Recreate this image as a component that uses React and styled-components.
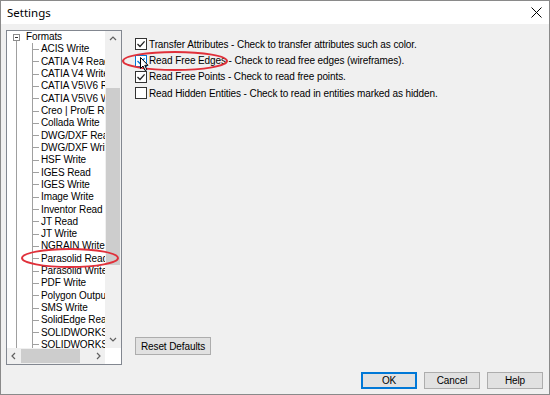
import React from 'react';
import styled, { createGlobalStyle } from 'styled-components';

const GlobalStyle = createGlobalStyle`
  html, body {
    margin: 0;
    padding: 0;
    background: #5a5a5a;
  }
  * {
    box-sizing: border-box;
  }
`;

const formats = [
  'ACIS Write',
  'CATIA V4 Read',
  'CATIA V4 Write',
  'CATIA V5\\V6 Read',
  'CATIA V5\\V6 Write',
  'Creo | Pro/E Read',
  'Collada Write',
  'DWG/DXF Read',
  'DWG/DXF Write',
  'HSF Write',
  'IGES Read',
  'IGES Write',
  'Image Write',
  'Inventor Read',
  'JT Read',
  'JT Write',
  'NGRAIN Write',
  'Parasolid Read',
  'Parasolid Write',
  'PDF Write',
  'Polygon Output',
  'SMS Write',
  'SolidEdge Read',
  'SOLIDWORKS Read',
  'SOLIDWORKS Write',
  'STEP Read',
];

const options = [
  { label: 'Transfer Attributes - Check to transfer attributes such as color.', checked: true },
  { label: 'Read Free Edges - Check to read free edges (wireframes).', checked: true, hover: true },
  { label: 'Read Free Points - Check to read free points.', checked: true },
  { label: 'Read Hidden Entities - Check to read in entities marked as hidden.', checked: false },
];

const Window = styled.div`
  position: relative;
  width: 550px;
  height: 395px;
  display: flex;
  flex-direction: column;
  background: #f0f0f0;
  border: 1px solid #8a8a8a;
  font-family: 'Liberation Sans', Arial, sans-serif;
  font-size: 10px;
  letter-spacing: -0.1px;
  color: #000;
  overflow: hidden;
`;

const TitleBar = styled.div`
  height: 23px;
  flex: none;
  display: flex;
  align-items: center;
  justify-content: space-between;
  padding: 0 6px 0 6px;
  background: #fff;
`;

const Title = styled.span`
  font-family: 'Noto Sans', 'Open Sans', sans-serif;
  font-size: 11.5px;
  letter-spacing: 0;
  color: #000;
`;

const CloseButton = styled.div`
  width: 14px;
  height: 14px;
  display: flex;
  align-items: center;
  justify-content: center;
`;

const Body = styled.div`
  flex: 1;
  display: flex;
  flex-direction: column;
  padding: 6px 6px 0 5px;
`;

const Main = styled.div`
  height: 335px;
  display: flex;
`;

const TreeBox = styled.div`
  width: 116px;
  height: 335px;
  flex: none;
  display: flex;
  flex-direction: column;
  background: #fff;
  border: 1px solid #828790;
`;

const TreeUpper = styled.div`
  flex: 1;
  display: flex;
  min-height: 0;
`;

const TreePane = styled.div`
  position: relative;
  flex: 1;
  overflow: hidden;
  white-space: nowrap;

  &::before {
    content: '';
    position: absolute;
    left: 9px;
    top: 10px;
    bottom: 0;
    width: 1px;
    background: #a0a0a0;
  }
`;

const NodeHead = styled.div`
  height: 12.32px;
  display: flex;
  align-items: center;
`;

const Expander = styled.span`
  position: relative;
  z-index: 1;
  width: 7px;
  height: 7px;
  margin-left: 6px;
  border: 1px solid #8c8c8c;
  background: #fff;
  display: flex;
  align-items: center;
  justify-content: center;

  &::after {
    content: '';
    width: 3px;
    height: 1px;
    background: #333;
  }
`;

const Children = styled.div`
  margin-left: 25px;
  border-left: 1px solid #a0a0a0;
`;

const Leaf = styled.div`
  height: 12.32px;
  display: flex;
  align-items: center;
`;

const Stub = styled.span`
  width: 6px;
  height: 1px;
  flex: none;
  background: #a0a0a0;
`;

const NodeLabel = styled.span`
  margin-left: ${(p) => p.$gap}px;
  line-height: 12px;
`;

const VScroll = styled.div`
  width: 16px;
  flex: none;
  display: flex;
  flex-direction: column;
  background: #f0f0f0;
`;

const ArrowButton = styled.div`
  width: ${(p) => p.$w || 16}px;
  height: 16px;
  flex: none;
  display: flex;
  align-items: center;
  justify-content: center;
`;

const VTrack = styled.div`
  flex: 1;
  padding: 41px 1px 0 1px;
`;

const VThumb = styled.div`
  height: 177px;
  background: #cdcdcd;
`;

const HScrollRow = styled.div`
  height: 16px;
  flex: none;
  display: flex;
`;

const HScroll = styled.div`
  flex: 1;
  display: flex;
  background: #f0f0f0;
`;

const HTrack = styled.div`
  flex: 1;
  padding: 1px 0;
`;

const HThumb = styled.div`
  width: 59px;
  height: 100%;
  background: #cdcdcd;
`;

const Corner = styled.div`
  width: 16px;
  background: #fff;
`;

const OptionsPanel = styled.div`
  flex: 1;
  display: flex;
  flex-direction: column;
  justify-content: space-between;
  align-items: flex-start;
  padding: 6px 0 10px 13px;
`;

const OptionList = styled.div`
  display: flex;
  flex-direction: column;
`;

const OptionRow = styled.label`
  height: 16.4px;
  display: flex;
  align-items: center;
  white-space: nowrap;
`;

const CheckBox = styled.span`
  width: 12px;
  height: 12px;
  flex: none;
  display: flex;
  align-items: center;
  justify-content: center;
  background: #fff;
  border: 1px solid ${(p) => (p.$hover ? '#0078d7' : '#333')};
  margin-right: 2px;
`;

const Button = styled.div`
  width: ${(p) => p.$w}px;
  height: ${(p) => p.$h}px;
  display: flex;
  align-items: center;
  justify-content: center;
  background: #e1e1e1;
  border: 1px solid ${(p) => (p.$default ? '#0078d7' : '#adadad')};
  box-shadow: ${(p) => (p.$default ? 'inset 0 0 0 1px #0078d7' : 'none')};
  white-space: nowrap;
`;

const Footer = styled.div`
  display: flex;
  justify-content: flex-end;
  gap: 7px;
  margin-top: 7px;
  padding-right: 0;
`;

const Overlay = styled.svg`
  position: absolute;
  left: -1px;
  top: -1px;
  pointer-events: none;
`;

const Chevron = ({ dir }) => {
  const paths = {
    up: 'M1 5 L4 2 L7 5',
    down: 'M1 2 L4 5 L7 2',
    left: 'M5 1 L2 4 L5 7',
    right: 'M3 1 L6 4 L3 7',
  };
  return (
    <svg width="8" height="8" viewBox="0 0 8 8">
      <path d={paths[dir]} fill="none" stroke="#606060" strokeWidth="1.2" />
    </svg>
  );
};

const CheckMark = ({ color }) => (
  <svg width="10" height="10" viewBox="0 0 10 10">
    <path d="M1.5 5 L4 7.5 L8.6 2.4" fill="none" stroke={color} strokeWidth="1.3" />
  </svg>
);

const App = () => {
  return (
    <>
      <GlobalStyle />
      <Window>
        <TitleBar>
          <Title>Settings</Title>
          <CloseButton>
            <svg width="11" height="11" viewBox="0 0 11 11">
              <path d="M0.5 0.5 L10.5 10.5 M10.5 0.5 L0.5 10.5" stroke="#000" strokeWidth="1" />
            </svg>
          </CloseButton>
        </TitleBar>
        <Body>
          <Main>
            <TreeBox>
              <TreeUpper>
                <TreePane>
                  <NodeHead>
                    <Expander />
                    <NodeLabel $gap={6}>Formats</NodeLabel>
                  </NodeHead>
                  <Children>
                    {formats.map((f) => (
                      <Leaf key={f}>
                        <Stub />
                        <NodeLabel $gap={2}>{f}</NodeLabel>
                      </Leaf>
                    ))}
                  </Children>
                </TreePane>
                <VScroll>
                  <ArrowButton>
                    <Chevron dir="up" />
                  </ArrowButton>
                  <VTrack>
                    <VThumb />
                  </VTrack>
                  <ArrowButton>
                    <Chevron dir="down" />
                  </ArrowButton>
                </VScroll>
              </TreeUpper>
              <HScrollRow>
                <HScroll>
                  <ArrowButton $w={14}>
                    <Chevron dir="left" />
                  </ArrowButton>
                  <HTrack>
                    <HThumb />
                  </HTrack>
                  <ArrowButton $w={14}>
                    <Chevron dir="right" />
                  </ArrowButton>
                </HScroll>
                <Corner />
              </HScrollRow>
            </TreeBox>
            <OptionsPanel>
              <OptionList>
                {options.map((o) => (
                  <OptionRow key={o.label}>
                    <CheckBox $hover={o.hover}>
                      {o.checked && <CheckMark color={o.hover ? '#0078d7' : '#222'} />}
                    </CheckBox>
                    {o.label}
                  </OptionRow>
                ))}
              </OptionList>
              <Button $w={76} $h={18}>Reset Defaults</Button>
            </OptionsPanel>
          </Main>
          <Footer>
            <Button $w={56} $h={17} $default>OK</Button>
            <Button $w={56} $h={17}>Cancel</Button>
            <Button $w={56} $h={17}>Help</Button>
          </Footer>
        </Body>
        <Overlay width="550" height="395" viewBox="0 0 550 395">
          <ellipse cx="175" cy="61" rx="52" ry="9" fill="none" stroke="#e0303a" strokeWidth="2" />
          <ellipse cx="70" cy="258" rx="48" ry="9" fill="none" stroke="#e0303a" strokeWidth="2" />
          <path
            d="M140.5 57.5 L140.5 68.5 L143 66 L145 70.5 L146.8 69.7 L144.8 65.3 L148 65.3 Z"
            fill="#fff"
            stroke="#000"
            strokeWidth="1"
          />
        </Overlay>
      </Window>
    </>
  );
};

export default App;
